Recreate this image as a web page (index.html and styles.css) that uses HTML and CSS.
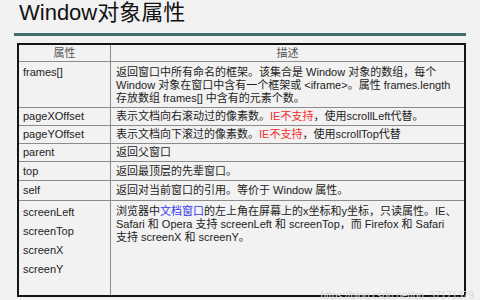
FILE: index.html
```html
<!DOCTYPE html>
<html lang="zh">
<head>
<meta charset="utf-8">
<title>Window对象属性</title>
<link rel="stylesheet" href="styles.css">
</head>
<body>
<div class="slide">
  <h1 class="title">Window对象属性</h1>
  <div class="rule"></div>
  <div class="props">
    <div class="cell head name">属性</div>
    <div class="cell head desc">描述</div>

    <div class="cell name top-al">frames[]</div>
    <div class="cell desc top-al">返回窗口中所有命名的框架。该集合是 Window 对象的数组，每个<br>Window 对象在窗口中含有一个框架或 &lt;iframe&gt;。属性 frames.length<br>存放数组 frames[] 中含有的元素个数。</div>

    <div class="cell name">pageXOffset</div>
    <div class="cell desc">表示文档向右滚动过的像素数。<span class="red">IE不支持</span>，使用scrollLeft代替。</div>

    <div class="cell name">pageYOffset</div>
    <div class="cell desc">表示文档向下滚过的像素数。<span class="red">IE不支持</span>，使用scrollTop代替</div>

    <div class="cell name">parent</div>
    <div class="cell desc">返回父窗口</div>

    <div class="cell name">top</div>
    <div class="cell desc">返回最顶层的先辈窗口。</div>

    <div class="cell name">self</div>
    <div class="cell desc">返回对当前窗口的引用。等价于 Window 属性。</div>

    <div class="cell name top-al last names">screenLeft<br>screenTop<br>screenX<br>screenY</div>
    <div class="cell desc top-al last screen">浏览器中<span class="blue">文档窗口</span>的左上角在屏幕上的x坐标和y坐标，只读属性。IE、<br>Safari 和 Opera 支持 screenLeft 和 screenTop，而 Firefox 和 Safari<br>支持 screenX 和 screenY。</div>
  </div>
  <div class="watermark">https://blog.csdn.net/qq_37171379</div>
</div>
</body>
</html>
```

FILE: styles.css
```css
html, body {
  margin: 0;
  padding: 0;
  background: #f2f2f2;
}

.slide {
  position: relative;
  width: 480px;
  height: 300px;
  overflow: hidden;
  font-family: "Liberation Sans", Arial, "Noto Sans CJK SC", sans-serif;
}

.title {
  margin: 0;
  height: 33px;
  padding-left: 19px;
  box-sizing: border-box;
  font-size: 22px;
  font-weight: normal;
  line-height: 26px;
  color: #111;
}

.rule {
  margin-left: 14px;
  width: 452px;
  height: 3px;
  background: #3f6f6b;
}

.props {
  margin: 7px 0 0 17px;
  width: 449px;
  height: 254px;
  box-sizing: border-box;
  border: 2px solid #151515;
  display: grid;
  grid-template-columns: 92px 1fr;
  grid-template-rows: 17px 46px 18px 18px 18px 19px 20px 1fr;
  font-size: 11px;
  line-height: 13px;
  color: #222;
}

.cell {
  box-sizing: border-box;
  border-bottom: 1px solid #8c8c8c;
  display: flex;
  align-items: center;
  white-space: nowrap;
}

.cell.last {
  border-bottom: none;
}

.name {
  border-right: 1px solid #8c8c8c;
  padding-left: 4px;
}

.desc {
  padding-left: 5px;
}

.head {
  justify-content: center;
  padding: 0;
  color: #555;
}

.top-al {
  align-items: flex-start;
  padding-top: 4px;
  display: block;
}

.names {
  line-height: 19px;
  padding-top: 2px;
}

.screen {
  padding-top: 4px;
}

.red {
  color: #f23030;
}

.blue {
  color: #3838f0;
}

.watermark {
  position: absolute;
  right: 6px;
  bottom: -2px;
  font-size: 10px;
  line-height: 12px;
  color: #d6d6d6;
  font-family: "Liberation Sans", Arial, sans-serif;
}
```
